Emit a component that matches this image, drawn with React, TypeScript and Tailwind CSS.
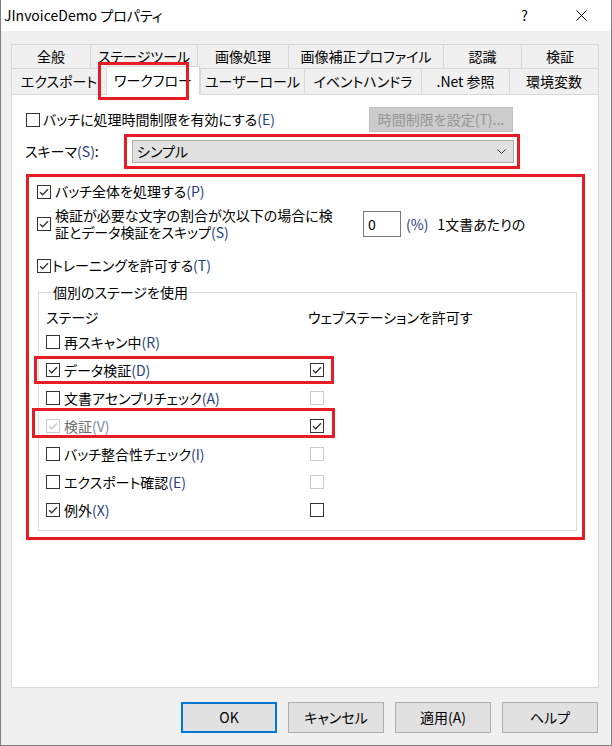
import type { ReactNode } from 'react'

const red = 'border-[#e81c24]'
const hotKey = 'text-[#1f3e7c]'

const backTabs = [
  { label: '全般', w: 'w-[79px]' },
  { label: 'ステージツール', w: 'w-[107px]' },
  { label: '画像処理', w: 'w-[91px]' },
  { label: '画像補正プロファイル', w: 'w-[155px]' },
  { label: '認識', w: 'w-[78px]' },
  { label: '検証', w: 'w-[78px]' },
]

const frontTabs = [
  { label: 'エクスポート', w: 'w-[95px]' },
  { label: 'ワークフロー', w: 'w-[94px]', active: true },
  { label: 'ユーザーロール', w: 'w-[104px]' },
  { label: 'イベントハンドラ', w: 'w-[117px]' },
  { label: '.Net 参照', w: 'w-[88px]' },
  { label: '環境変数', w: 'w-[90px]' },
]

type Stage = {
  label: string
  key: string
  checked?: boolean
  disabled?: boolean
  web?: 'on' | 'off' | 'dim'
  mark?: 'a' | 'b'
}

const stages: Stage[] = [
  { label: '再スキャン中', key: 'R' },
  { label: 'データ検証', key: 'D', checked: true, web: 'on', mark: 'a' },
  { label: '文書アセンブリチェック', key: 'A', web: 'dim' },
  { label: '検証', key: 'V', checked: true, disabled: true, web: 'on', mark: 'b' },
  { label: 'バッチ整合性チェック', key: 'I', web: 'dim' },
  { label: 'エクスポート確認', key: 'E', web: 'dim' },
  { label: '例外', key: 'X', checked: true, web: 'off' },
]

function Box({ checked = false, disabled = false }: { checked?: boolean; disabled?: boolean }) {
  return (
    <span
      className={`flex h-[14px] w-[14px] shrink-0 items-center justify-center border bg-white ${
        disabled ? 'border-[#cccccc]' : 'border-[#333333]'
      }`}
    >
      {checked && (
        <svg width="10" height="8" viewBox="0 0 10 8" fill="none">
          <path
            d="M1 4.2 L3.7 6.8 L9 1.2"
            stroke={disabled ? '#c8c8c8' : '#333333'}
            strokeWidth="1.3"
          />
        </svg>
      )}
    </span>
  )
}

function Label({ children, k, dim = false }: { children: ReactNode; k: string; dim?: boolean }) {
  return (
    <span className={dim ? 'text-[#6d6d6d]' : ''}>
      {children}
      <span className={dim ? 'text-[#7d89a3]' : hotKey}>({k})</span>
    </span>
  )
}

export default function App() {
  return (
    <div className="flex h-[746px] w-[612px] flex-col border-x border-b border-[#7f7f7f] bg-[#f0f0f0] font-['Noto_Sans_CJK_JP',sans-serif] text-[14px] leading-[17px] text-black [font-feature-settings:'palt']">
      {/* title bar */}
      <div className="flex h-[31px] shrink-0 items-center bg-white">
        <span className="pl-[3px]">JInvoiceDemo プロパティ</span>
        <span className="ml-auto">?</span>
        <svg className="ml-[48px] mr-[24px]" width="11" height="11" viewBox="0 0 11 11">
          <path d="M0.5 0.5 L10.5 10.5 M10.5 0.5 L0.5 10.5" stroke="#000" strokeWidth="1" />
        </svg>
      </div>

      {/* tabs */}
      <div className="relative ml-[10px] mt-[13px] w-[588px]">
        <div className="flex h-[24px]">
          {backTabs.map((t, i) => (
            <div
              key={t.label}
              className={`flex items-center justify-center border-l border-t border-[#d9d9d9] ${t.w} ${
                i === backTabs.length - 1 ? 'border-r' : ''
              }`}
            >
              {t.label}
            </div>
          ))}
        </div>
        <div className="flex h-[26px] items-end">
          {frontTabs.map((t, i) =>
            t.active ? (
              <div
                key={t.label}
                className={`relative z-10 -mb-px flex h-[29px] items-center justify-center border-x border-t border-[#d9d9d9] bg-white pb-[2px] ${t.w}`}
              >
                {t.label}
              </div>
            ) : (
              <div
                key={t.label}
                className={`flex h-[26px] items-center justify-center border-l border-t border-[#d9d9d9] ${t.w} ${
                  i === frontTabs.length - 1 ? 'border-r' : ''
                }`}
              >
                {t.label}
              </div>
            ),
          )}
        </div>
        <span className={`pointer-events-none absolute left-[87px] top-[18px] z-20 h-[38px] w-[91px] border-[3px] ${red}`} />
      </div>

      {/* page */}
      <div className="ml-[10px] flex h-[594px] w-[588px] shrink-0 flex-col border border-[#d9d9d9] bg-white">
        <div className="mt-[12px] flex h-[25px] items-center pl-[14px]">
          <Box />
          <span className="ml-[3px]">
            <Label k="E">バッチに処理時間制限を有効にする</Label>
          </span>
          <button className="ml-auto mr-[85px] h-[25px] w-[144px] border border-[#bfbfbf] bg-[#cccccc] text-[#959595]">
            時間制限を設定(T)...
          </button>
        </div>

        <div className="mt-[2px] flex h-[35px] items-center">
          <span className="w-[112px] pl-[13px]">
            <Label k="S">スキーマ</Label>:
          </span>
          <div className={`h-[35px] w-[396px] border-[3px] py-[3px] pl-[5px] pr-[3px] ${red}`}>
            <div className="flex h-full items-center border border-[#adadad] bg-[#e1e1e1] pl-[4px]">
              <span>シンプル</span>
              <svg className="ml-auto mr-[7px]" width="9" height="5" viewBox="0 0 9 5" fill="none">
                <path d="M0.5 0.5 L4.5 4.5 L8.5 0.5" stroke="#333" strokeWidth="1" />
              </svg>
            </div>
          </div>
        </div>

        <div className={`ml-[14px] mt-[5px] flex h-[366px] w-[559px] flex-col border-[3px] ${red}`}>
          <div className="mt-[6px] flex h-[17px] items-center pl-[8px]">
            <Box checked />
            <span className="ml-[4px]">
              <Label k="P">バッチ全体を処理する</Label>
            </span>
          </div>

          <div className="mt-[7px] flex h-[34px] items-center pl-[8px]">
            <Box checked />
            <div className="ml-[4px] flex w-[308px] flex-col">
              <div className="h-[17px] overflow-visible leading-[17px]">検証が必要な文字の割合が次以下の場合に検</div>
              <div className="h-[17px] overflow-visible leading-[17px]">
                証とデータ検証をスキップ<span className={hotKey}>(S)</span>
              </div>
            </div>
            <div className="flex h-[26px] w-[38px] items-center border border-[#7a7a7a] pl-[4px]">0</div>
            <span className={`ml-[5px] ${hotKey}`}>(%)</span>
            <span className="ml-[9px]">1文書あたりの</span>
          </div>

          <div className="mt-[16px] flex h-[17px] items-center pl-[8px]">
            <Box checked />
            <span className="ml-[1px]">
              <Label k="T">トレーニングを許可する</Label>
            </span>
          </div>

          <fieldset className="mb-[6px] ml-[9px] mr-[5px] mt-[10px] border border-[#dcdcdc] pb-[6px] pl-[7px]">
            <legend className="ml-[5px] px-[2px] leading-[17px]">個別のステージを使用</legend>
            <div className="mt-[8px] flex h-[17px] items-center">
              <span className="w-[262px]">ステージ</span>
              <span>ウェブステーションを許可す</span>
            </div>
            <div className="mt-[2px]">
              {stages.map((s) => (
                <div key={s.key} className="relative flex h-[28px] items-center">
                  <div className="flex w-[262px] items-center">
                    <Box checked={s.checked} disabled={s.disabled} />
                    <span className="ml-[4px]">
                      <Label k={s.key} dim={s.disabled}>
                        {s.label}
                      </Label>
                    </span>
                  </div>
                  {s.web && (
                    <div className="pl-[2px]">
                      <Box checked={s.web === 'on'} disabled={s.web === 'dim'} />
                    </div>
                  )}
                  {s.mark === 'a' && (
                    <span className={`pointer-events-none absolute -left-[12px] top-0 h-[28px] w-[300px] border-[3px] ${red}`} />
                  )}
                  {s.mark === 'b' && (
                    <span className={`pointer-events-none absolute -left-[14px] -top-[4px] h-[30px] w-[303px] border-[3px] ${red}`} />
                  )}
                </div>
              ))}
            </div>
          </fieldset>
        </div>
      </div>

      {/* buttons */}
      <div className="mt-[14px] flex justify-end gap-[11px] pr-[13px]">
        <button className="h-[31px] w-[96px] border-2 border-[#0078d7] bg-[#e1e1e1]">OK</button>
        <button className="h-[31px] w-[96px] border border-[#adadad] bg-[#e1e1e1]">キャンセル</button>
        <button className="h-[31px] w-[96px] border border-[#adadad] bg-[#e1e1e1]">適用(A)</button>
        <button className="h-[31px] w-[96px] border border-[#adadad] bg-[#e1e1e1]">ヘルプ</button>
      </div>
    </div>
  )
}
